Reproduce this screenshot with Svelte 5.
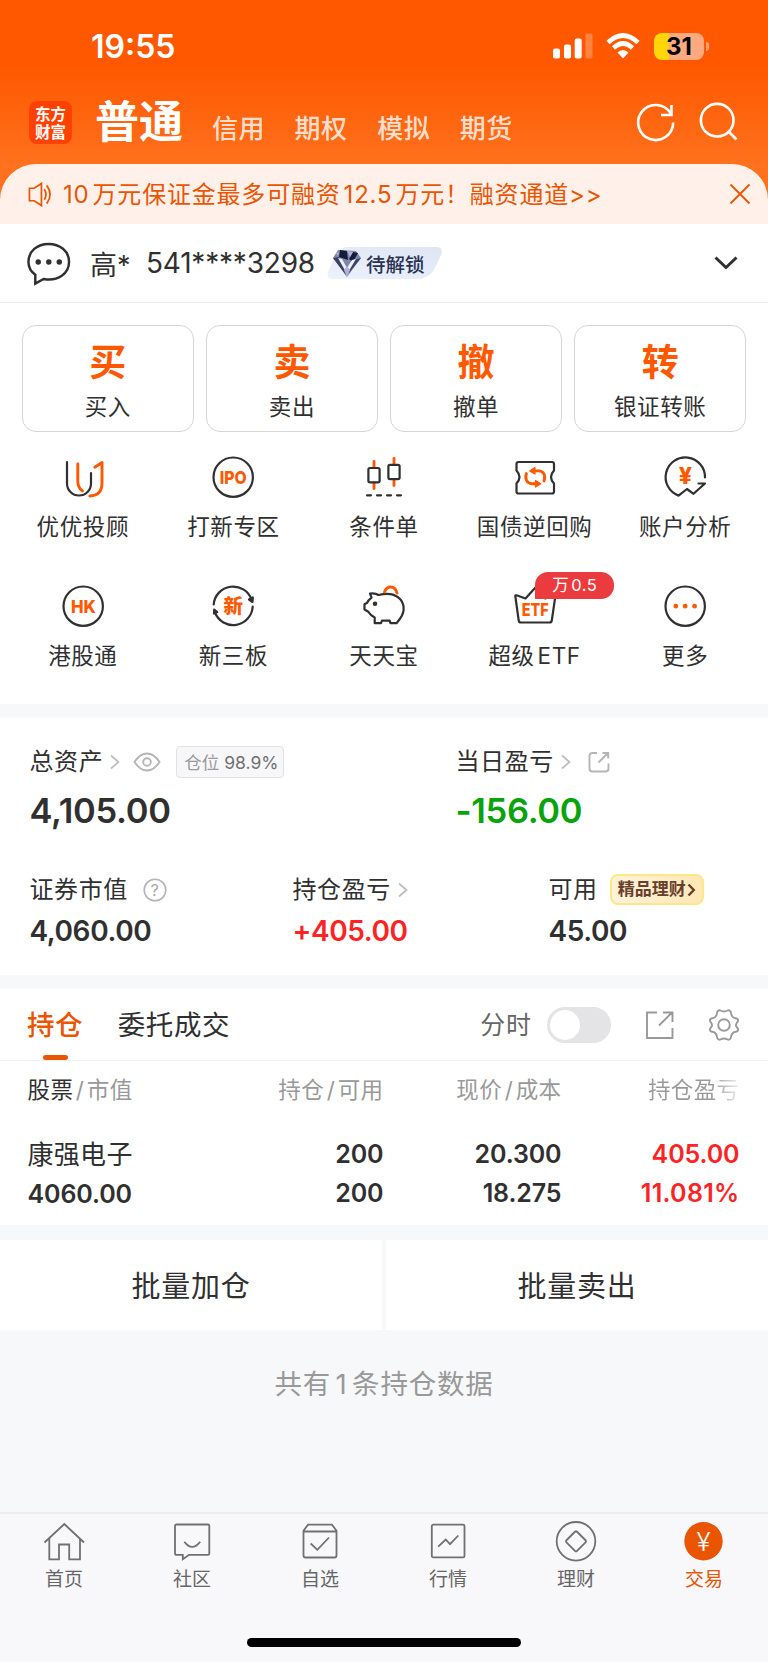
<script>
  const modes = ['信用', '期权', '模拟', '期货']

  const actions = [
    { mark: '买', label: '买入' },
    { mark: '卖', label: '卖出' },
    { mark: '撤', label: '撤单' },
    { mark: '转', label: '银证转账' },
  ]

  const features = [
    { icon: 'advisor', label: '优优投顾' },
    { icon: 'ipo', label: '打新专区' },
    { icon: 'candles', label: '条件单' },
    { icon: 'ticket', label: '国债逆回购' },
    { icon: 'analysis', label: '账户分析' },
    { icon: 'hk', label: '港股通' },
    { icon: 'board', label: '新三板' },
    { icon: 'pig', label: '天天宝' },
    { icon: 'etf', label: '超级 ETF', badge: '万 0.5' },
    { icon: 'more', label: '更多' },
  ]

  const tabs = [
    { icon: 'home', label: '首页' },
    { icon: 'community', label: '社区' },
    { icon: 'watchlist', label: '自选' },
    { icon: 'market', label: '行情' },
    { icon: 'wealth', label: '理财' },
    { icon: 'trade', label: '交易' },
  ]

  let showMinute = $state(false)
  let activeTab = $state('trade')
</script>

{#snippet arrow()}
  <svg class="arrow" width="10" height="16" viewBox="0 0 10 16"><path d="M1 1.5l7.5 6.5L1 14.5" /></svg>
{/snippet}

{#snippet featureIcon(name)}
  <svg class="feature-icon" width="44" height="44" viewBox="0 0 44 44">
    {#if name === 'advisor'}
      <path d="M6 7V28.5A12 12 0 0 0 30 28.5V18" />
      <path class="hot" d="M16.8 9V26.5Q17 33 21.5 36M33.8 12.3L41 7.5V28Q41 40.5 28.8 41" />
    {:else if name === 'ipo'}
      <circle cx="22.2" cy="22.2" r="19.7" />
      <text x="22.3" y="28.8" textLength="27" lengthAdjust="spacingAndGlyphs" font-size="18">IPO</text>
    {:else if name === 'candles'}
      <path class="hot" d="M12 6.5V12M12 28V33.5M32 3.5V9M32 25V30.5" />
      <rect x="6.4" y="13" width="11.2" height="14.3" rx="1.5" />
      <rect x="26.4" y="9.8" width="11.2" height="14.3" rx="1.5" />
      <path d="M5 40.3H40" stroke-dasharray="4 6" />
    {:else if name === 'ticket'}
      <path d="M5.5 7H39Q41 7 41 9V15.5Q35 22 41 28.5V36.5Q41 38.5 39 38.5H5.5Q3.5 38.5 3.5 36.5V28.5Q9.5 22 3.5 15.5V9Q3.5 7 5.5 7Z" />
      <path class="hot" d="M13.4 18.5C11.5 24 14 28.7 19 28.7H23M31 26C33 20.5 30.5 15.9 25.5 15.9H21.5" />
      <path class="hot solid" d="M22.5 25.5L27.8 28.7L22.5 32ZM22 12.6L16.7 15.9L22 19.1Z" />
    {:else if name === 'analysis'}
      <path d="M42 22.5A19.7 19.7 0 1 0 15.5 40.6L24 34L30.5 38.8L42 28.5H35.5" />
      <text x="22.3" y="29.3" font-size="23">¥</text>
    {:else if name === 'hk'}
      <circle cx="22.2" cy="22.2" r="19.7" />
      <text x="22.4" y="28.8" textLength="25" lengthAdjust="spacingAndGlyphs" font-size="18">HK</text>
    {:else if name === 'board'}
      <path d="M2.7 20.5A19.5 19.5 0 0 1 40.5 15.5M41.7 22.5A19.5 19.5 0 0 1 4 28.5" />
      <path class="fill" d="M38 15.5L41.8 13.5L41.5 18ZM3 29.5L3.2 25.5L6.2 28Z" />
      <text x="22.3" y="29.3" font-size="19.5">新</text>
    {:else if name === 'pig'}
      <path d="M8 9.5C11 9 14 9.3 16.5 11C22 9.8 29 9 34 12C41.5 16 43.5 24 40 31.5Q38.5 34.5 34.5 39.2H28.5L27.7 36.7H20L19 39.2H12.7V33.5Q8.5 31.5 6.3 27.8L2.5 25.5V20L5 19Q6 16.5 9.5 13.7Z" />
      <circle class="fill" cx="13" cy="19.8" r="1.2" />
      <path class="hot" d="M22.5 8Q24.5 3 28.5 3Q33.5 3 35 9" />
    {:else if name === 'etf'}
      <path d="M2.3 12Q2.3 11 3.5 11.3L12.5 14.5L22.2 3.8L32.2 14.5L41 11.3Q42.5 11 42.3 12.5L38.8 36.5Q38.5 38.5 36.5 38.5H8Q6 38.5 5.7 36.5Z" />
      <text x="22.2" y="32.2" textLength="27" lengthAdjust="spacingAndGlyphs" font-size="18">ETF</text>
    {:else}
      <circle cx="22.2" cy="22.2" r="19.7" />
      <circle class="hot solid" cx="12.8" cy="22.2" r="1.8" />
      <circle class="hot solid" cx="22.2" cy="22.2" r="1.8" />
      <circle class="hot solid" cx="31.6" cy="22.2" r="1.8" />
    {/if}
  </svg>
{/snippet}

{#snippet tabIcon(name)}
  <svg class="tab-icon" width="44" height="44" viewBox="0 0 44 44">
    {#if name === 'home'}
      <path d="M2.5 23.5L22.3 5L42 23.5M7.3 19.5V40.3H17V25.5H27.2V40.3H38V19.5" />
    {:else if name === 'community'}
      <path d="M6.5 5.5H38Q39.3 5.5 39.3 7V34.5Q39.3 35.8 38 35.8H19L12.8 40.3V35.8H6.5Q5 35.8 5 34.5V7Q5 5.5 6.5 5.5Z" />
      <path d="M14.3 22.7Q22.2 33 30.2 22.7" />
    {:else if name === 'watchlist'}
      <path d="M5.5 11.8L10 5.7H34L38.5 11.8V36.5Q38.5 38.5 36.5 38.5H7.5Q5.5 38.5 5.5 36.5ZM5.5 12.5H38.5" />
      <path d="M12.7 24.5L19.3 30.8L31 18.5" />
    {:else if name === 'market'}
      <rect x="5.8" y="5.7" width="32.7" height="32.7" rx="1.5" />
      <path d="M12.2 27.7L19.7 20.5L24 25.2L32.3 16.5" />
    {:else if name === 'wealth'}
      <circle cx="22" cy="22.3" r="19.3" />
      <rect x="14.5" y="14.8" width="15" height="15" rx="1.5" transform="rotate(45 22 22.3)" />
    {:else}
      <circle class="coin" cx="21.5" cy="22.2" r="19.2" />
      <text x="21.5" y="31.5" font-size="26">¥</text>
    {/if}
  </svg>
{/snippet}

<main>
  <header>
    <div class="status">
      <span class="time">19:55</span>
      <svg class="signal" width="40" height="26" viewBox="0 0 40 26">
        <rect x="0" y="15.5" width="7" height="10" rx="2" />
        <rect x="11" y="11.5" width="7" height="14" rx="2" />
        <rect x="21.7" y="5.5" width="7" height="20" rx="2" />
        <rect x="32.5" y=".5" width="7" height="25" rx="2" opacity=".25" />
      </svg>
      <svg class="wifi" width="36" height="27" viewBox="0 0 36 27">
        <path d="M3 9.5Q18-4.5 33 9.5" />
        <path d="M8.5 15Q18 6 27.5 15" />
        <path class="dot" d="M12.5 19.5Q18 14.5 23.5 19.5L18 25.5Z" />
      </svg>
      <span class="battery">31</span>
      <span class="battery-cap"></span>
    </div>
    <nav class="modes">
      <span class="logo">东方<br />财富</span>
      <h1>普通</h1>
      {#each modes as mode}
        <span class="mode">{mode}</span>
      {/each}
      <svg class="refresh" width="40" height="40" viewBox="0 0 40 40">
        <path d="M37.2 20.5A17.5 17.5 0 1 1 34.5 11.2M35.5 3V13H25" />
      </svg>
      <svg class="search" width="40" height="40" viewBox="0 0 40 40">
        <circle cx="18.2" cy="18.2" r="16.3" />
        <path d="M30 30L37.5 37.5" />
      </svg>
    </nav>
    <div class="notice">
      <svg class="horn" width="24" height="25" viewBox="0 0 25 26">
        <path d="M1.5 6.5H6.5L14 1.5V24.5L6.5 19.5H1.5ZM17 7.5Q20.5 13 17 18.5M19.5 3.5Q26.5 13 19.5 22.5" />
      </svg>
      <span>10 万元保证金最多可融资 12.5 万元！融资通道&gt;&gt;</span>
      <svg class="close" width="22" height="22" viewBox="0 0 22 22"><path d="M1.5 1.5L20.5 20.5M20.5 1.5L1.5 20.5" /></svg>
    </div>
  </header>

  <section class="account">
    <svg class="bubble" width="45" height="45" viewBox="0 0 46 46">
      <path d="M9.5 34.5V43.5L18 38.8C33 41.5 44 33 44 21.5C44 10 34.5 3 23 3S2.5 10.5 2.5 21.5Q2.5 29.5 9.5 34.5Z" />
      <circle cx="12.5" cy="21.5" r="2.8" /><circle cx="23.3" cy="21.5" r="2.8" /><circle cx="34" cy="21.5" r="2.8" />
    </svg>
    <span class="name">高*</span>
    <span class="number">541****3298</span>
    <span class="level">
      <svg class="level-bg" width="116" height="32" viewBox="0 0 116 32">
        <defs>
          <linearGradient id="level" x1="1" y1="0" x2="0" y2="1">
            <stop offset="0" stop-color="#dfe5f3" /><stop offset="1" stop-color="#edf1fd" />
          </linearGradient>
        </defs>
        <path fill="url(#level)" d="M21 0H109Q117 0 114 8L109 19Q103 32 90 32H6Q-1 32 1 25L6 13Q11 0 21 0Z" />
      </svg>
      <svg class="gem" width="30" height="30" viewBox="0 0 30 30">
        <path fill="#7f88a8" d="M6 2L24 3L29 10L15 29L1 10Z" />
        <path fill="#141c3c" d="M8 2L15 3L16 12L7 9ZM21 4L26 5L21 14L17 11Z" />
        <path fill="#384268" d="M1 10L7 9L14 20V27ZM29 10L22 12L17 21L16 26Z" />
        <path fill="#f1f0f7" d="M6 10L10 11L15 20L20 12L24 11L15 26Z" />
        <path fill="#b7b0d8" d="M15 3L21 4L18 9ZM4 5L7 4L6 8ZM12 22L15 18L18 22L15 29Z" />
      </svg>
      <b>待解锁</b>
    </span>
    <svg class="expand" width="26" height="16" viewBox="0 0 26 16"><path d="M2.5 2.5L13 12.5L23.5 2.5" /></svg>
  </section>

  <section class="actions">
    {#each actions as { mark, label }}
      <button class="action">
        <strong>{mark}</strong>
        <span>{label}</span>
      </button>
    {/each}
  </section>

  <section class="features">
    {#each features as { icon, label, badge }}
      <div class="feature">
        {@render featureIcon(icon)}
        <span>{label}</span>
        {#if badge}<em>{badge}</em>{/if}
      </div>
    {/each}
  </section>

  <section class="assets">
    <div class="totals">
      <div>
        <p class="label">
          总资产 {@render arrow()}
          <svg class="eye" width="28" height="20" viewBox="0 0 28 20">
            <path d="M1.5 10Q7 1.5 14 1.5T26.5 10Q21 18.5 14 18.5T1.5 10Z" /><circle cx="14" cy="10" r="3.8" />
          </svg>
          <span class="position">仓位 <i>98.9%</i></span>
        </p>
        <p class="total">4,105.00</p>
      </div>
      <div>
        <p class="label">
          当日盈亏 {@render arrow()}
          <svg class="share-small" width="22" height="22" viewBox="0 0 22 22">
            <path d="M9 2H4.5Q1.5 2 1.5 5V17.5Q1.5 20.5 4.5 20.5H17.5Q20.5 20.5 20.5 17.5V12.5M10.5 11.5L20 2M14.5 2H20.2V7.5" />
          </svg>
        </p>
        <p class="total down">-156.00</p>
      </div>
    </div>
    <div class="details">
      <div>
        <p class="label">
          证券市值
          <svg class="help" width="24" height="24" viewBox="0 0 24 24">
            <circle cx="12" cy="12" r="10.8" /><text x="12" y="17.8" font-size="16.5">?</text>
          </svg>
        </p>
        <p class="amount">4,060.00</p>
      </div>
      <div>
        <p class="label">持仓盈亏 {@render arrow()}</p>
        <p class="amount up">+405.00</p>
      </div>
      <div>
        <p class="label">
          可用
          <span class="premium">
            精品理财<svg width="9" height="14" viewBox="0 0 9 14"><path d="M1.5 1.5L6.8 7L1.5 12.5" /></svg>
          </span>
        </p>
        <p class="amount">45.00</p>
      </div>
    </div>
  </section>

  <section class="holdings">
    <div class="holding-tabs">
      <span class="active">持仓</span>
      <span>委托成交</span>
      <label>
        分时
        <input type="checkbox" bind:checked={showMinute} />
        <i class="switch"></i>
      </label>
      <svg class="share" width="30" height="30" viewBox="0 0 30 30">
        <path d="M12 2.5H2V28H27.5V18M14 15.5L27 2.5M18 2.5H27.5V12" />
      </svg>
      <svg class="gear" width="34" height="34" viewBox="0 0 34 34">
        <path d="M11 3Q12 1.8 13.5 2.5Q17 4.5 20.5 2.5Q22 1.8 23 3Q23.8 3.3 24 5Q24.5 9.5 28.5 10.2Q31 10.5 31 12Q31.5 12.5 30.5 13.8Q27.5 17 30.5 20.2Q31.5 21.5 31 22Q31 23.5 28.5 23.8Q24.5 24.5 24 29Q23.8 30.7 23 31Q22 32.2 20.5 31.5Q17 29.5 13.5 31.5Q12 32.2 11 31Q10.2 30.7 10 29Q9.5 24.5 5.5 23.8Q3 23.5 3 22Q2.5 21.5 3.5 20.2Q6.5 17 3.5 13.8Q2.5 12.5 3 12Q3 10.5 5.5 10.2Q9.5 9.5 10 5Q10.2 3.3 11 3Z" />
        <circle cx="17" cy="17" r="5.8" />
      </svg>
    </div>
    <div class="row head">
      <span><b>股票</b><u>/</u>市值</span>
      <span>持仓<u>/</u>可用</span>
      <span>现价<u>/</u>成本</span>
      <span class="fade">持仓盈亏</span>
    </div>
    <div class="row">
      <span><span class="stock">康强电子</span><br />4060.00</span>
      <span>200<br />200</span>
      <span>20.300<br />18.275</span>
      <span class="up">405.00<br /><span class="rate">11.081%</span></span>
    </div>
  </section>

  <section class="batch">
    <button>批量加仓</button>
    <button>批量卖出</button>
  </section>

  <p class="summary">共有 1 条持仓数据</p>

  <footer>
    <nav>
      {#each tabs as { icon, label }}
        <button class:current={activeTab === icon} onclick={() => (activeTab = icon)}>
          {@render tabIcon(icon)}
          <span>{label}</span>
        </button>
      {/each}
    </nav>
    <div class="home-indicator"></div>
  </footer>
</main>

<style>
  :global(body) {
    background: #f7f8fa;
  }
  main {
    width: 768px;
    height: 1662px;
    overflow: hidden;
    display: flex;
    flex-direction: column;
    background: #f7f8fa;
    color: #303030;
    font-family: Inter, 'Noto Sans CJK SC', sans-serif;
    box-sizing: border-box;
  }
  main * {
    box-sizing: border-box;
  }
  svg {
    display: block;
    flex: none;
    fill: none;
  }
  p,
  h1 {
    margin: 0;
  }
  button {
    padding: 0;
    border: 0;
    background: none;
    color: inherit;
    font: inherit;
  }
  span {
    white-space: nowrap;
  }
  header {
    height: 224px;
    flex: none;
    background: linear-gradient(#ff5800 0, #ff5800 66px, #ff711d 164px, #ff711d 100%);
  }
  .status {
    height: 92px;
    display: flex;
    align-items: center;
    padding-left: 91px;
    color: #fff;
  }
  .time {
    width: 462px;
    font-size: 32px;
    font-weight: 600;
  }
  .signal,
  .wifi .dot {
    fill: #fff;
  }
  .wifi {
    margin-left: 12px;
    stroke: #fff;
    stroke-width: 4.6;
  }
  .wifi .dot {
    stroke: none;
  }
  .battery {
    width: 50px;
    height: 27px;
    margin-left: 13px;
    border-radius: 8px;
    background: linear-gradient(90deg, #ffd60a 31%, #ffa981 31%);
    color: #000;
    font-size: 24px;
    font-weight: 700;
    line-height: 27px;
    text-align: center;
  }
  .battery-cap {
    width: 3px;
    height: 9px;
    margin-left: 2px;
    border-radius: 0 4px 4px 0;
    background: #ffa07a;
  }
  .modes {
    height: 72px;
    display: flex;
    align-items: center;
    padding-left: 29px;
  }
  .logo {
    width: 43px;
    height: 43px;
    margin-top: -11px;
    padding-top: 3px;
    border-radius: 8px;
    background: #ff4103;
    color: #fff;
    font-family: 'Noto Sans CJK SC', sans-serif;
    font-size: 15.5px;
    font-weight: 700;
    line-height: 18px;
    text-align: center;
  }
  h1 {
    width: 116px;
    margin: -12px 6px 0 23px;
    color: #fff;
    font-size: 44px;
    font-weight: 700;
    line-height: 60px;
  }
  .mode {
    width: 82.6px;
    margin: -3px 5px 0 -5px;
    color: rgba(255, 255, 255, 0.8);
    font-size: 26px;
    font-weight: 500;
    letter-spacing: 0.5px;
  }
  .refresh,
  .search {
    margin: -12px 23px 0 89px;
    stroke: #fff;
    stroke-width: 2.6;
  }
  .search {
    margin-left: 0;
  }
  .notice {
    height: 60px;
    display: flex;
    align-items: center;
    padding: 0 17px 0 28px;
    border-radius: 36px 36px 0 0;
    background: #fff1ea;
    color: #ea5504;
    font-size: 24px;
    letter-spacing: 0.8px;
    word-spacing: -4.5px;
  }
  .notice svg {
    stroke: #ea5504;
    stroke-width: 1.8;
  }
  .notice span {
    margin: -3px 0 0 11px;
  }
  .notice .close {
    margin-left: auto;
  }
  .account {
    height: 79px;
    flex: none;
    display: flex;
    align-items: center;
    padding: 0 29px 0 26px;
    border-bottom: 1px solid #ececec;
    background: #fff;
    font-size: 28px;
  }
  .bubble {
    stroke: #303030;
    stroke-width: 2.5;
  }
  .bubble circle {
    fill: #303030;
    stroke: none;
  }
  .name {
    width: 56px;
    margin-left: 19px;
    font-size: 27px;
  }
  .number {
    letter-spacing: -0.2px;
  }
  .level {
    width: 116px;
    height: 32px;
    position: relative;
    display: flex;
    align-items: center;
    margin-left: 12px;
    color: #283352;
    font-size: 19.5px;
  }
  .level b {
    font-weight: 500;
    position: relative;
    margin-left: 4px;
  }
  .level-bg {
    position: absolute;
    inset: 0;
  }
  .gem {
    position: relative;
    margin-left: 5px;
  }
  .expand {
    margin-left: auto;
    stroke: #303030;
    stroke-width: 3;
  }
  .actions {
    height: 129px;
    flex: none;
    display: grid;
    grid-template-columns: repeat(4, 1fr);
    gap: 12.5px;
    padding: 22px 22px 0;
    background: #fff;
  }
  .action {
    display: flex;
    flex-direction: column;
    align-items: center;
    padding-top: 13px;
    border: 1px solid #d6d6d6;
    border-radius: 14px;
  }
  .action strong {
    color: #ff5800;
    font-size: 37px;
    line-height: 48px;
  }
  .action span {
    font-size: 22.5px;
    line-height: 40px;
    letter-spacing: 0.6px;
  }
  .features {
    height: 272px;
    flex: none;
    display: grid;
    grid-template-columns: repeat(5, 150.6px);
    grid-auto-rows: 129.3px;
    justify-content: center;
    padding-top: 23px;
    background: #fff;
  }
  .feature {
    position: relative;
    display: flex;
    flex-direction: column;
    align-items: center;
  }
  .feature span {
    margin-top: 10px;
    font-size: 22.5px;
    line-height: 36px;
    letter-spacing: 0.6px;
    word-spacing: -4px;
  }
  .feature em {
    width: 79px;
    height: 27px;
    position: absolute;
    top: -12px;
    left: 76px;
    border-radius: 13px 13px 13px 0;
    background: #ec3b3e;
    color: #fff;
    font-size: 16.5px;
    font-style: normal;
    line-height: 27px;
    text-align: center;
    letter-spacing: 0.5px;
    word-spacing: -3px;
  }
  .feature-icon {
    stroke: #303030;
    stroke-width: 2.2;
    stroke-linecap: round;
    stroke-linejoin: round;
  }
  .feature-icon .hot {
    stroke: #ff5800;
    stroke-width: 2.9;
  }
  .feature-icon .solid {
    fill: #ff5800;
    stroke-width: 1.2;
  }
  .feature-icon .fill {
    fill: #303030;
  }
  .feature-icon text {
    fill: #ff5800;
    stroke: none;
    font-weight: 800;
    text-anchor: middle;
  }
  .assets {
    height: 257px;
    flex: none;
    margin-top: 14px;
    padding-left: 29.5px;
    background: #fff;
  }
  .totals,
  .details {
    display: grid;
    grid-template-columns: 426px 1fr;
    padding-top: 25px;
  }
  .details {
    grid-template-columns: 263px 256px 1fr;
    padding-top: 30px;
  }
  .label {
    height: 38px;
    display: flex;
    align-items: center;
    font-size: 24px;
    line-height: 36px;
    letter-spacing: 0.6px;
  }
  .arrow {
    margin-left: 7px;
    stroke: #bdbdbd;
    stroke-width: 1.7;
  }
  .eye {
    margin-left: 13px;
    stroke: #b5b5b5;
    stroke-width: 1.9;
  }
  .position {
    height: 32px;
    margin-left: 15px;
    padding: 0 5px 0 7px;
    border: 1px solid #e2e2e6;
    border-radius: 4px;
    background: #f7f7fa;
    color: #999;
    font-size: 17.5px;
    letter-spacing: 0;
    line-height: 31px;
  }
  .position i {
    color: #707070;
    font-style: normal;
  }
  .total {
    font-size: 34.5px;
    font-weight: 600;
    line-height: 60px;
    letter-spacing: -0.3px;
  }
  .down {
    color: #09a30b;
  }
  .share-small,
  .help {
    margin-left: 17px;
    stroke: #b5b5b5;
    stroke-width: 1.9;
  }
  .help {
    margin-left: 15px;
    stroke-width: 1.6;
  }
  .help text {
    fill: #aaa;
    stroke: none;
    text-anchor: middle;
  }
  .premium {
    height: 31px;
    display: flex;
    align-items: center;
    margin: -1px 0 0 12px;
    padding: 0 6px;
    border: 2px solid #ffe784;
    border-radius: 8px;
    background: linear-gradient(90deg, #fff3da, #ffe7b8);
    color: #68402a;
    font-size: 17px;
    font-weight: 700;
    line-height: 27px;
    letter-spacing: 0;
  }
  .premium svg {
    margin-left: 1px;
    stroke: #68402a;
    stroke-width: 2.4;
  }
  .amount {
    font-size: 28px;
    font-weight: 600;
    line-height: 45px;
    letter-spacing: -0.4px;
  }
  .up {
    color: #fb2323;
  }
  .holdings {
    height: 236px;
    flex: none;
    margin-top: 14px;
    background: #fff;
  }
  .holding-tabs {
    height: 72px;
    display: flex;
    align-items: center;
    padding: 0 28px 0 27px;
    border-bottom: 1px solid #f0f0f2;
    font-size: 27.5px;
    letter-spacing: 0.6px;
  }
  .holding-tabs > span {
    height: 72px;
    margin-right: 34.5px;
    line-height: 73px;
  }
  .holding-tabs .active {
    position: relative;
    color: #ea5504;
    font-weight: 500;
  }
  .active::after {
    content: '';
    width: 25px;
    height: 5px;
    position: absolute;
    left: 16px;
    bottom: 1px;
    border-radius: 3px;
    background: #ea5504;
  }
  label {
    display: flex;
    align-items: center;
    margin-left: auto;
    color: #666;
    font-size: 25px;
    line-height: 34px;
  }
  input {
    display: none;
  }
  .switch {
    width: 64px;
    height: 36px;
    margin-left: 15px;
    padding: 3px;
    border-radius: 18px;
    background: #e4e4e6;
  }
  .switch::after {
    content: '';
    display: block;
    width: 30px;
    height: 30px;
    border-radius: 50%;
    background: #fff;
  }
  input:checked + .switch {
    background: #ea5504;
  }
  input:checked + .switch::after {
    margin-left: 28px;
  }
  .share {
    margin-left: 34.5px;
    stroke: #999;
    stroke-width: 1.9;
  }
  .gear {
    margin: 0 -1px 0 32px;
    stroke: #999;
    stroke-width: 1.9;
  }
  .row {
    display: grid;
    grid-template-columns: 178px 178px 178px 178px;
    padding: 25px 0 0 27.5px;
    font-size: 25px;
    font-weight: 600;
    line-height: 39px;
    letter-spacing: -0.1px;
  }
  .row > span:not(:first-child) {
    text-align: right;
  }
  .rate {
    letter-spacing: 0.3px;
  }
  .head {
    padding-top: 9px;
    color: #999;
    font-size: 22.5px;
    font-weight: 400;
    line-height: 40px;
    letter-spacing: 0.4px;
  }
  .head b {
    color: #303030;
    font-weight: 400;
  }
  .head u {
    padding: 0 2.5px;
    text-decoration: none;
  }
  .fade {
    color: transparent;
    background: linear-gradient(90deg, #999 84%, #eee 100%);
    background-clip: text;
  }
  .stock {
    font-size: 26px;
    font-weight: 400;
    letter-spacing: 0.3px;
  }
  .batch {
    height: 90px;
    flex: none;
    display: grid;
    grid-template-columns: 1fr 1fr;
    gap: 4px;
    margin-top: 15px;
  }
  .batch button {
    padding-bottom: 2px;
    background: #fff;
    font-size: 29px;
    letter-spacing: 0.7px;
  }
  .summary {
    padding-top: 34px;
    color: #999;
    font-size: 27.5px;
    line-height: 40px;
    text-align: center;
    letter-spacing: 0.8px;
    word-spacing: -4px;
  }
  footer {
    height: 150px;
    flex: none;
    margin-top: auto;
    border-top: 2px solid #ededf0;
    background: #f8f8fb;
  }
  footer nav {
    display: grid;
    grid-template-columns: repeat(6, 128px);
  }
  footer button {
    display: flex;
    flex-direction: column;
    align-items: center;
    padding-top: 5px;
    color: #666;
    font-size: 19px;
  }
  footer button span {
    margin-top: 3px;
    line-height: 28px;
  }
  .tab-icon {
    stroke: #707070;
    stroke-width: 1.8;
  }
  .tab-icon .coin {
    fill: #ea5504;
    stroke: none;
  }
  .tab-icon text {
    fill: #fff;
    stroke: none;
    font-weight: 300;
    text-anchor: middle;
  }
  footer .current {
    color: #ea5504;
  }
  .home-indicator {
    width: 274px;
    height: 9px;
    margin: 44px auto 0;
    border-radius: 5px;
    background: #000;
  }
</style>
